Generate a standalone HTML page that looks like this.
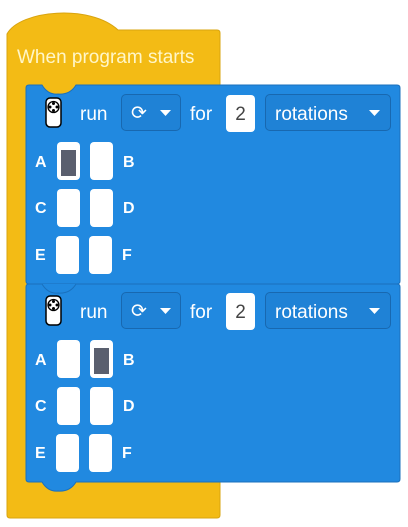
<!DOCTYPE html>
<html><head><style>
body{margin:0;width:408px;height:527px;background:#fff;position:relative;overflow:hidden;font-family:"Liberation Sans",sans-serif}
.a{position:absolute}
.t{color:#fff;font-size:19px}
.l{color:#fff;font-size:16px;font-weight:bold}
.dd{position:absolute;border:1px solid #1868b0;background:#1f82d6;border-radius:5px;height:37px;box-sizing:border-box}
.num{position:absolute;background:#fff;border-radius:4px;width:29px;height:37px;color:#444;font-size:19px;text-align:center;line-height:39px}
.bx{position:absolute;background:#fff;border-radius:4px;width:23px;height:38px}
.dk{position:absolute;background:#5a5f6e;left:4px;top:8px;width:15px;height:26px}
</style></head><body>
<svg class="a" style="left:0;top:0" width="408" height="527">
<path d="M7 34 C20 10 90 4 118 30 L217 30 Q220 30 220 33 L220 515 Q220 518 217 518 L10 518 Q7 518 7 515 Z" fill="#f3bb15" stroke="#d9a40f" stroke-width="1"/>
<path d="M29 85 L42 85 Q48 95 58 94 Q70 95 76 85 L397 85 Q400 85 400 88 L400 281 Q400 284 397 284 L76 284 Q70 294 58 293 Q48 294 42 284 L29 284 Q26 284 26 281 L26 88 Q26 85 29 85 Z" fill="#2189e0" stroke="#1a70bd" stroke-width="1"/>
<path d="M29 284 L397 284 Q400 284 400 287 L400 479 Q400 482 397 482 L76 482 Q70 492 58 491 Q48 492 42 482 L29 482 Q26 482 26 479 L26 287 Q26 284 29 284 Z" fill="#2189e0" stroke="#1a70bd" stroke-width="1"/>
<path d="M42 284 Q48 294 58 293 Q70 294 76 284" fill="#2189e0" stroke="#1a70bd" stroke-width="1"/>
</svg>
<div class="a" style="left:17px;top:47px;color:#fff6c8;font-size:19px">When program starts</div>

<div class="a" style="left:0;top:0">
<svg class="a" style="left:45px;top:97px" width="17" height="31"><rect x="1" y="1" width="15" height="29" rx="4" fill="#fff" stroke="#000" stroke-width="1.5"/><circle cx="8.5" cy="10" r="5.5" fill="#fff" stroke="#000" stroke-width="1.3"/><circle cx="8.5" cy="6.5" r="1.5"/><circle cx="8.5" cy="13.5" r="1.5"/><circle cx="5" cy="10" r="1.5"/><circle cx="12" cy="10" r="1.5"/></svg>
<div class="a t" style="left:80px;top:104px">run</div>
<div class="dd" style="left:121px;top:94px;width:60px"><span class="a" style="left:9px;top:7px;color:#fff;font-size:19px">⟳</span><svg class="a" style="left:38px;top:15px" width="11" height="7"><path d="M0 0 L11 0 L5.5 6Z" fill="#fff"/></svg></div>
<div class="a t" style="left:190px;top:104px">for</div>
<div class="num" style="left:226px;top:95px">2</div>
<div class="dd" style="left:265px;top:94px;width:126px"><span class="a t" style="left:9px;top:9px">rotations</span><svg class="a" style="left:103px;top:15px" width="11" height="7"><path d="M0 0 L11 0 L5.5 6Z" fill="#fff"/></svg></div>
<div class="a l" style="left:35px;top:154px">A</div><div class="bx" style="left:57px;top:142px"><div class="dk"></div></div><div class="bx" style="left:90px;top:142px"></div><div class="a l" style="left:123px;top:154px">B</div>
<div class="a l" style="left:35px;top:200px">C</div><div class="bx" style="left:57px;top:189px"></div><div class="bx" style="left:90px;top:189px"></div><div class="a l" style="left:123px;top:200px">D</div>
<div class="a l" style="left:35px;top:247px">E</div><div class="bx" style="left:56px;top:236px"></div><div class="bx" style="left:89px;top:236px"></div><div class="a l" style="left:122px;top:247px">F</div>
</div>
<div class="a" style="left:0;top:198px">
<svg class="a" style="left:45px;top:97px" width="17" height="31"><rect x="1" y="1" width="15" height="29" rx="4" fill="#fff" stroke="#000" stroke-width="1.5"/><circle cx="8.5" cy="10" r="5.5" fill="#fff" stroke="#000" stroke-width="1.3"/><circle cx="8.5" cy="6.5" r="1.5"/><circle cx="8.5" cy="13.5" r="1.5"/><circle cx="5" cy="10" r="1.5"/><circle cx="12" cy="10" r="1.5"/></svg>
<div class="a t" style="left:80px;top:104px">run</div>
<div class="dd" style="left:121px;top:94px;width:60px"><span class="a" style="left:9px;top:7px;color:#fff;font-size:19px">⟳</span><svg class="a" style="left:38px;top:15px" width="11" height="7"><path d="M0 0 L11 0 L5.5 6Z" fill="#fff"/></svg></div>
<div class="a t" style="left:190px;top:104px">for</div>
<div class="num" style="left:226px;top:95px">2</div>
<div class="dd" style="left:265px;top:94px;width:126px"><span class="a t" style="left:9px;top:9px">rotations</span><svg class="a" style="left:103px;top:15px" width="11" height="7"><path d="M0 0 L11 0 L5.5 6Z" fill="#fff"/></svg></div>
<div class="a l" style="left:35px;top:154px">A</div><div class="bx" style="left:57px;top:142px"></div><div class="bx" style="left:90px;top:142px"><div class="dk"></div></div><div class="a l" style="left:123px;top:154px">B</div>
<div class="a l" style="left:35px;top:200px">C</div><div class="bx" style="left:57px;top:189px"></div><div class="bx" style="left:90px;top:189px"></div><div class="a l" style="left:123px;top:200px">D</div>
<div class="a l" style="left:35px;top:247px">E</div><div class="bx" style="left:56px;top:236px"></div><div class="bx" style="left:89px;top:236px"></div><div class="a l" style="left:122px;top:247px">F</div>
</div>
</body></html>
